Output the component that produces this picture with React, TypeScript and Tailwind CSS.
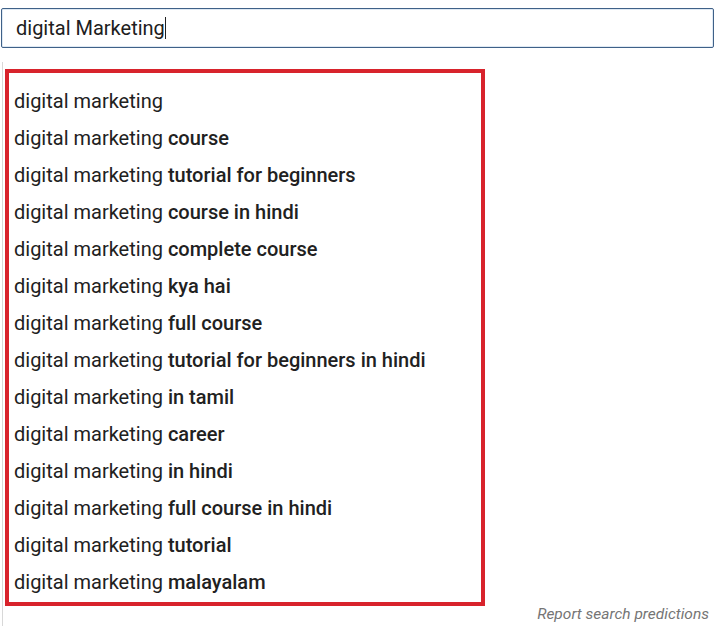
const suggestions: string[] = [
  "",
  "course",
  "tutorial for beginners",
  "course in hindi",
  "complete course",
  "kya hai",
  "full course",
  "tutorial for beginners in hindi",
  "in tamil",
  "career",
  "in hindi",
  "full course in hindi",
  "tutorial",
  "malayalam",
];

export default function App() {
  return (
    <div className="w-[716px] h-[626px] bg-white overflow-hidden font-['Roboto',sans-serif] text-[#212121]">
      <div className="pt-2 pl-[1px] pr-[2px]">
        <div className="h-10 rounded-[2px] border border-[#3f6188] shadow-[inset_0_0_0_1px_#dfe9f3] flex items-center pl-[14px] text-[20px] text-[#202020]">
          <span>digital Marketing</span>
          <span className="w-px h-[22px] bg-[#202020]" />
        </div>
      </div>
      <div className="mt-[14px] ml-[2px] border-l border-[#d8d8d8] h-[570px] flex flex-col">
        <div className="ml-[2px] mt-[7px] w-[480px] border-4 border-[#d8232c] pt-[9px] pb-[2px] pl-[5px]">
          {suggestions.map((s, i) => (
            <div key={i} className="h-[37px] flex items-center text-[20px] leading-none">
              <span>digital marketing</span>
              {s && <span className="font-medium ml-[5px]">{s}</span>}
            </div>
          ))}
        </div>
        <div className="flex justify-end pr-[7px] text-[15.5px] leading-[16px] italic text-[#757575]">
          Report search predictions
        </div>
      </div>
    </div>
  );
}
